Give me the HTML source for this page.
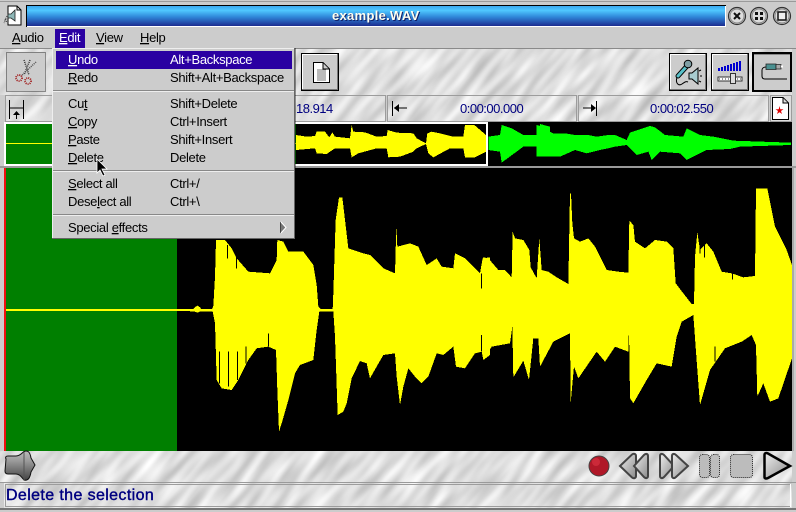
<!DOCTYPE html>
<html><head><meta charset="utf-8">
<style>
html,body{margin:0;padding:0;background:#ccc;width:796px;height:512px;overflow:hidden}
svg{display:block}
text{font-family:"Liberation Sans",sans-serif;font-size:13px;letter-spacing:-.32px;fill:#000;white-space:pre}
.t{fill:#000080;letter-spacing:-.5px}
.c{shape-rendering:crispEdges}
</style></head><body>
<svg width="796" height="512" viewBox="0 0 796 512" xmlns="http://www.w3.org/2000/svg">
<defs>
<filter id="turb" color-interpolation-filters="sRGB" x="0" y="0" width="100%" height="100%">
<feTurbulence type="fractalNoise" baseFrequency=".025 .12" numOctaves="1" seed="7" stitchTiles="stitch"/>
<feColorMatrix type="matrix" values=".42 0 0 0 .66  .42 0 0 0 .66  .42 0 0 0 .66  0 0 0 0 1"/>
</filter>
<pattern id="tex" width="400" height="300" patternUnits="userSpaceOnUse" patternTransform="rotate(-50)">
<rect width="400" height="300" fill="#ddd" filter="url(#turb)"/>
</pattern>
</defs>

<!-- window -->
<rect width="796" height="512" fill="#cccccc"/>
<rect x="0" y="1" width="796" height="1" fill="#9a9a9a" class="c"/>
<rect x="0" y="508" width="796" height="2" fill="#777" class="c"/>

<!-- texture layer -->
<g fill="url(#tex)" class="c">
<rect x="0" y="49" width="792" height="46"/>
<rect x="5" y="95" width="381" height="27"/>
<rect x="388" y="95" width="189" height="27"/>
<rect x="579" y="95" width="190" height="27"/>
<rect x="0" y="451" width="792" height="31"/>
<rect x="4" y="483" width="788" height="25"/>
</g>

<!-- title bar -->
<linearGradient id="tb" x1="0" y1="0" x2="0" y2="1"><stop offset="0" stop-color="#3aa8ee"/><stop offset=".22" stop-color="#50c8ff"/><stop offset=".55" stop-color="#2f86d8"/><stop offset="1" stop-color="#1c2c90"/></linearGradient>
<rect x="26" y="5" width="700" height="22" fill="#000" class="c"/>
<rect x="27" y="6" width="699" height="21" fill="#fff" class="c"/>
<rect x="27" y="6" width="698" height="20" fill="url(#tb)" class="c"/>
<text x="333" y="21" style="font-size:13px;letter-spacing:.3px;font-weight:bold;fill:#10206a">example.WAV</text>
<text x="332" y="20" style="font-size:13px;letter-spacing:.3px;font-weight:bold;fill:#fffff0">example.WAV</text>

<!-- app icon -->
<path d="M8 6H17L21 10V25H8Z" fill="#fff" stroke="#000"/>
<path d="M17 6V10H21" fill="none" stroke="#000"/>
<path d="M8 14H11L15 10V21L11 18H8Z" fill="#8fb8b8" stroke="#222" stroke-width=".8"/>
<path d="M7 16L5 20L8 23M6 19L4 23" fill="none" stroke="#333" stroke-dasharray="1 1"/>
<!-- title buttons -->
<g stroke="#333" stroke-width="1.200">
<circle cx="737" cy="16" r="8.500" fill="#ddd"/><circle cx="759" cy="16" r="8.500" fill="#ddd"/><circle cx="782" cy="16" r="8.500" fill="#ddd"/>
</g>
<g fill="none" stroke="#888" stroke-width="1"><circle cx="737" cy="16" r="7"/><circle cx="759" cy="16" r="7"/><circle cx="782" cy="16" r="7"/></g>
<path d="M734 13L740 19M740 13L734 19" stroke="#111" stroke-width="2"/>
<path d="M755 12h3v3h-3zM760 12h3v3h-3zM755 17h3v3h-3zM760 17h3v3h-3z" fill="#111"/>
<rect x="778" y="12" width="8" height="8" fill="#eee" stroke="#111" stroke-width="1.500"/>

<!-- menubar -->
<rect x="55" y="29" width="30" height="19" fill="#2a00a2" class="c"/>
<text x="12" y="42"><tspan text-decoration="underline">A</tspan>udio</text>
<text x="59" y="42" style="fill:#fff"><tspan text-decoration="underline">E</tspan>dit</text>
<text x="96" y="42"><tspan text-decoration="underline">V</tspan>iew</text>
<text x="140" y="42"><tspan text-decoration="underline">H</tspan>elp</text>

<!-- toolbar -->
<rect x="0" y="48" width="796" height="1" fill="#8a8a8a" class="c"/>
<!-- cut button -->
<rect x="6" y="52" width="39" height="39" fill="#ccc" class="c"/>
<rect x="6.500" y="52.500" width="39" height="39" fill="none" stroke="#333" stroke-dasharray="1 1"/>
<path d="M30 60L24 75M24 60L29 75" stroke="#333" stroke-width="1.500" stroke-dasharray="1 1"/>
<path d="M36 62L21 76" stroke="#555" stroke-width="1.500" stroke-dasharray="1 1"/>
<circle cx="19" cy="78" r="3" fill="none" stroke="#a01818" stroke-width="1.800" stroke-dasharray="1 1"/>
<circle cx="28" cy="81" r="3" fill="none" stroke="#a01818" stroke-width="1.800" stroke-dasharray="1 1"/>
<!-- doc button -->
<g class="c">
<rect x="301" y="53" width="38" height="38" fill="#000"/>
<rect x="302" y="54" width="36" height="36" fill="#777"/>
<rect x="302" y="54" width="35" height="35" fill="#fff"/>
<rect x="303" y="55" width="34" height="34" fill="#ccc"/>
</g>
<path d="M313.500 62.500H323L329.500 69V82.500H313.500Z" fill="#fff" stroke="#000"/>
<path d="M323 63V69H329" fill="#ccc" stroke="#000"/>
<path d="M317 70H326M317 72H326M317 74H326M317 76H326M317 78H326M317 80H326" stroke="#777"/>

<!-- right buttons -->
<g class="c">
<rect x="669" y="53" width="38" height="38" fill="#000"/><rect x="670" y="54" width="36" height="36" fill="#777"/><rect x="670" y="54" width="35" height="35" fill="#fff"/><rect x="671" y="55" width="34" height="34" fill="#ccc"/>
<rect x="711" y="53" width="38" height="38" fill="#000"/><rect x="712" y="54" width="36" height="36" fill="#777"/><rect x="712" y="54" width="35" height="35" fill="#fff"/><rect x="713" y="55" width="34" height="34" fill="#ccc"/>
<rect x="752" y="52" width="40" height="40" fill="#000"/><rect x="754" y="54" width="36" height="36" fill="#ccc"/><rect x="754" y="54" width="36" height="1" fill="#888"/>
</g>
<!-- mic -->
<path d="M678 76L687 66" stroke="#000" stroke-width="5" stroke-linecap="round"/>
<path d="M678 76L687 66" stroke="#58c0c8" stroke-width="3" stroke-linecap="round"/>
<circle cx="688" cy="64" r="3.800" fill="#7f9ea4" stroke="#000"/>
<path d="M677 77C675 84 679 86 682 84S686 81 688 82" fill="none" stroke="#000"/>
<path d="M689 73H692L698 68V84L692 79H689Z" fill="#a8ccd0" stroke="#000"/>
<path d="M699 71L701 70M700 76H702M699 81L701 82" stroke="#000"/>
<!-- mixer -->
<g class="c" fill="#0000d0">
<rect x="718" y="68" width="2" height="3"/><rect x="721" y="67" width="2" height="4"/><rect x="724" y="66" width="2" height="5"/><rect x="727" y="65" width="2" height="6"/><rect x="730" y="64" width="2" height="7"/><rect x="733" y="63" width="2" height="8"/><rect x="736" y="62" width="2" height="9"/><rect x="739" y="61" width="2" height="10"/>
</g>
<rect x="718" y="77" width="24" height="4" fill="#fff" stroke="#333" stroke-width="1" class="c"/>
<path d="M719 79h22" stroke="#333" stroke-dasharray="1 2" class="c"/>
<rect x="730.500" y="73.500" width="5" height="10" fill="#ddd" stroke="#333"/>
<!-- jack -->
<path d="M762 70C762 68 764 67 766 67M762 70V76C762 78 763 79 765 79H787" fill="none" stroke="#000"/>
<path d="M766 64H776V69.500H766Z" fill="#4a9090" stroke="#222" stroke-width=".8"/>
<path d="M776 64.500H781V69H776Z" fill="#aaa" stroke="#222" stroke-width=".8"/>
<path d="M781 66.500H783" stroke="#fff" stroke-width="2"/>

<!-- time row -->
<rect x="771" y="95" width="21" height="27" fill="#ddd" class="c"/>
<g fill="none" stroke="#9c9c9c" class="c">
<rect x="5.500" y="95.500" width="380" height="26"/>
<rect x="387.500" y="95.500" width="189" height="26"/>
<rect x="578.500" y="95.500" width="190" height="26"/>
<rect x="770.500" y="95.500" width="21" height="26"/>
</g>
<path d="M9.500 100V119M23.500 100V119M9 108H24M16.500 119V112" stroke="#000" fill="none"/>
<path d="M13 115H20L16.500 111Z" fill="#000"/>
<text x="296" y="113" class="t">18.914</text>
<text x="460" y="113" class="t">0:00:00.000</text>
<text x="650" y="113" class="t">0:00:02.550</text>
<path d="M392.500 101V116M394 108H407" stroke="#000" fill="none"/>
<path d="M394 108L399 104V112Z" fill="#000"/>
<path d="M596.500 101V116M583 108H595" stroke="#000" fill="none"/>
<path d="M596 108L591 104V112Z" fill="#000"/>
<path d="M772.500 97.500H783L788.500 103V119.500H772.500Z" fill="#fff" stroke="#000"/>
<path d="M783 98V103H788" fill="#ddd" stroke="#000"/>
<path d="M779.500 106L780.300 109.200H783.500L781 111L782 114L779.500 112.300L777 114L778 111L775.500 109.200H778.700Z" fill="#e00000"/>

<!-- overview -->
<rect x="4" y="122" width="788" height="44" fill="#000" class="c"/>
<rect x="4" y="122" width="484" height="2" fill="#fff" class="c"/>
<rect x="4" y="164" width="484" height="2" fill="#fff" class="c"/>
<rect x="486" y="122" width="2" height="44" fill="#fff" class="c"/>
<rect x="4" y="122" width="2" height="44" fill="#fff" class="c"/>
<rect x="6" y="124" width="290" height="40" fill="#007f00" class="c"/>
<rect x="6" y="143" width="290" height="1" fill="#ffff00" class="c"/>
<g transform="translate(290 0) scale(.33333)" class="c">
<polygon fill="#ffff00" points="18,405 50,410 75,408 80,395 105,395 118,412 127,397 135,410 180,415 185,375 190,395 225,397 260,410 290,408 293,390 320,398 370,400 380,415 408,430 412,400 425,395 450,400 490,410 520,410 525,375 553,375 588,405 588,455 555,472 525,472 520,445 480,445 430,472 415,460 408,432 380,445 370,455 330,470 295,472 290,445 260,445 205,460 185,472 180,445 135,445 110,462 80,460 75,445 18,450"/>
<polygon fill="#00ff00" points="595,410 630,405 635,375 665,385 700,405 745,405 750,372 780,380 780,470 750,470 745,440 700,440 635,488 630,455 595,450"/>
</g>
<g transform="translate(540 0) scale(.33333)" class="c">
<polygon fill="#00ff00" points="-10,375 0,378 20,390 40,400 75,400 105,405 145,405 170,410 205,405 225,405 260,420 270,398 330,378 345,382 375,405 430,410 440,385 460,395 480,405 520,410 580,422 753,428 753,435 600,440 570,447 500,450 440,480 420,460 360,455 335,480 325,455 290,465 260,435 225,440 205,445 180,450 140,460 105,450 60,470 0,470 -10,470"/>
</g>
<rect x="0" y="166" width="796" height="2" fill="#9a9a9a" class="c"/>

<!-- main wave -->
<rect x="4" y="168" width="788" height="283" fill="#000" class="c"/>
<rect x="4" y="168" width="2" height="283" fill="#f01010" class="c"/>
<rect x="6" y="168" width="171" height="283" fill="#007f00" class="c"/>
<rect x="6" y="309" width="172" height="2" fill="#ffff00" class="c"/>
<g transform="translate(170 170) scale(.33333)" class="c">
<polygon fill="#ffff00" points="20,417 70,417 74,412 82,407 90,412 94,417 126,417 130,408 135,320 138,210 165,210 185,235 200,265 235,305 300,310 320,270 322,210 340,215 355,245 400,245 430,285 440,345 445,410 452,417 488,417 490,370 497,150 507,82 517,82 535,235 580,250 600,255 640,295 675,310 679,170 682,230 720,220 745,230 770,285 800,265 815,290 850,295 855,250 885,265 930,310 938,265 960,262 960,555 940,570 935,545 915,550 885,595 858,590 850,530 820,555 800,550 775,620 755,640 735,620 715,595 700,650 690,705 680,620 675,550 640,555 600,625 590,580 570,573 545,625 530,700 520,725 503,735 495,500 490,425 448,425 440,480 430,570 390,585 375,610 355,690 335,760 327,785 322,660 318,540 295,530 260,535 235,570 205,630 185,660 155,655 140,630 135,460 128,425 92,424 82,428 72,424 20,423"/>
<path d="M148 545V640M175 545V650M203 545V630M228 530V580M172 225V265M200 262V295M295 490V530M935 310V355M935 495V545" stroke="#000" stroke-width="3" fill="none"/>
</g>
<g transform="translate(480 170) scale(.33333)" class="c">
<polygon fill="#ffff00" points="0,310 10,262 25,265 55,300 75,300 95,322 98,185 105,205 130,210 148,240 152,292 170,325 178,205 185,300 205,305 230,322 265,342 270,70 273,70 277,160 282,205 300,215 325,205 345,230 380,300 415,305 445,308 448,152 460,165 465,215 495,235 525,210 560,215 580,235 587,340 610,370 635,402 642,402 645,260 652,187 660,240 680,220 700,245 725,305 755,310 790,322 825,318 828,55 862,55 885,170 920,240 936,285 936,565 895,685 870,695 850,640 832,680 828,525 815,495 785,515 735,535 690,600 660,705 648,545 640,435 605,455 590,500 575,590 530,580 500,630 460,700 450,685 447,470 445,545 405,530 375,575 350,545 295,625 282,590 272,698 270,490 220,515 180,590 175,505 160,505 147,630 130,572 100,622 97,470 90,520 35,530 10,568 0,495"/>
<path d="M5 310V355M5 495V545M160 505V560M660 220V250M673 220V262M705 530V575M442 290V308M757 310V328" stroke="#000" stroke-width="3" fill="none"/>
</g>
<rect x="792" y="168" width="2" height="283" fill="#aaa" class="c"/>

<!-- bottom toolbar -->
<linearGradient id="m" x1="0" y1="0" x2="0" y2="1"><stop offset="0" stop-color="#bbb"/><stop offset=".35" stop-color="#999"/><stop offset="1" stop-color="#444"/></linearGradient>
<path d="M6 459C5 457 6 456 8 456H16C20 456 22 453 24 451.500C28 450 30 452 31 458L35 465L31 472C30 478 28 481 24 480C22 478 20 474 16 474H8C6 474 5 473 5 471Z" fill="url(#m)" stroke="#111"/>
<path d="M24 452V480" stroke="#555"/>
<circle cx="599" cy="466" r="10" fill="#b01828" stroke="#444"/>
<circle cx="596" cy="462" r="4" fill="#d83040" opacity=".7"/>
<linearGradient id="b" x1="0" y1="0" x2="1" y2="1"><stop offset="0" stop-color="#eee"/><stop offset="1" stop-color="#8a8a8a"/></linearGradient>
<path d="M620 466L632 454.500C634 453 636 454 636 456V476C636 478 634 479 632 477.500Z" fill="url(#b)" stroke="#444" stroke-width="2"/>
<path d="M634 466L644 455C646 453 648 454 648 456V476C648 478 646 479 644 477Z" fill="url(#b)" stroke="#444" stroke-width="2"/>
<path d="M660 456C660 454 662 453 664 455L674 466L664 477C662 479 660 478 660 476Z" fill="url(#b)" stroke="#444" stroke-width="2"/>
<path d="M672 456C672 454 674 453 676 455L688 466L676 477C674 479 672 478 672 476Z" fill="url(#b)" stroke="#444" stroke-width="2"/>
<rect x="699.500" y="454.500" width="10" height="23" rx="3" fill="#bcbcbc" stroke="#222" stroke-dasharray="1 1"/>
<rect x="710.500" y="454.500" width="9" height="23" rx="3" fill="#bcbcbc" stroke="#222" stroke-dasharray="1 1"/>
<rect x="730.500" y="454.500" width="22" height="23" rx="3" fill="#bcbcbc" stroke="#222" stroke-dasharray="1 1"/>
<path d="M764.500 455C764.500 453 766 452.500 768 453.500L790 466L768 478C766 479 764.500 478.500 764.500 477Z" fill="url(#b)" stroke="#000" stroke-width="2.500"/>

<!-- status -->
<rect x="0" y="482" width="796" height="1" fill="#9a9a9a" class="c"/>
<rect x="5.500" y="484.500" width="785" height="22" fill="none" stroke="#9c9c9c" class="c"/>
<rect x="790" y="484" width="1" height="23" fill="#fff" class="c"/>
<text x="6" y="500" style="font-size:16px;letter-spacing:.38px;fill:#000080;stroke:#000080;stroke-width:.4px">Delete the selection</text>

<!-- menu -->
<rect x="52" y="48" width="243" height="191" fill="#ccc" class="c"/>
<path d="M52.500 239V48.500H295" fill="none" stroke="#eee" class="c"/>
<path d="M52 238.500H294.500V48" fill="none" stroke="#666" class="c"/>
<rect x="295" y="48" width="1" height="192" fill="#000" class="c" opacity=".4"/>
<rect x="56" y="51" width="236" height="18" fill="#2a00a2" class="c"/>
<rect x="53" y="90" width="241" height="1" fill="#888" class="c"/><rect x="53" y="91" width="241" height="1" fill="#eee" class="c"/>
<rect x="53" y="170" width="241" height="1" fill="#888" class="c"/><rect x="53" y="171" width="241" height="1" fill="#eee" class="c"/>
<rect x="53" y="214" width="241" height="1" fill="#888" class="c"/><rect x="53" y="215" width="241" height="1" fill="#eee" class="c"/>
<g>
<text x="68" y="64" style="fill:#fff"><tspan text-decoration="underline">U</tspan>ndo</text>
<text x="170" y="64" style="fill:#fff">Alt+Backspace</text>
<text x="68" y="82"><tspan text-decoration="underline">R</tspan>edo</text>
<text x="170" y="82">Shift+Alt+Backspace</text>
<text x="68" y="108">Cu<tspan text-decoration="underline">t</tspan></text>
<text x="170" y="108">Shift+Delete</text>
<text x="68" y="126"><tspan text-decoration="underline">C</tspan>opy</text>
<text x="170" y="126">Ctrl+Insert</text>
<text x="68" y="144"><tspan text-decoration="underline">P</tspan>aste</text>
<text x="170" y="144">Shift+Insert</text>
<text x="68" y="162"><tspan text-decoration="underline">D</tspan>elete</text>
<text x="170" y="162">Delete</text>
<text x="68" y="188"><tspan text-decoration="underline">S</tspan>elect all</text>
<text x="170" y="188">Ctrl+/</text>
<text x="68" y="206">Dese<tspan text-decoration="underline">l</tspan>ect all</text>
<text x="170" y="206">Ctrl+\</text>
<text x="68" y="232">Special <tspan text-decoration="underline">e</tspan>ffects</text>
</g>
<path d="M280.500 222V233L285.500 227.500Z" fill="#777"/>
<path d="M280.500 222V233" stroke="#444"/><path d="M281 222L286 227.500L281 233" fill="none" stroke="#fff"/>

<!-- cursor -->
<path d="M97 159V173L100 170L103 176L105 175L102 169H107Z" fill="#000" stroke="#fff" stroke-width=".8"/>
</svg>
</body></html>
